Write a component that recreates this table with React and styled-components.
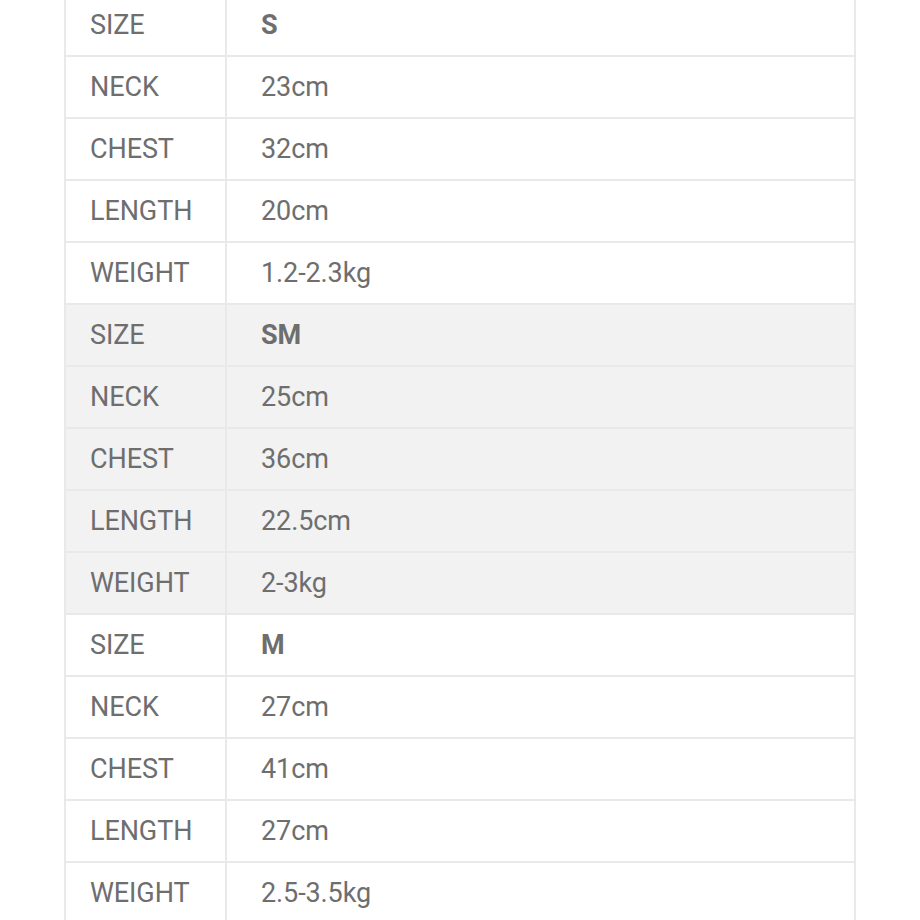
import React from "react";
import styled, { createGlobalStyle } from "styled-components";

const Global = createGlobalStyle`
  html, body { margin: 0; padding: 0; background: #ffffff; }
  body { font-family: Roboto, "Noto Sans", Arial, sans-serif; overflow: hidden; }
`;

const Page = styled.div`
  width: 920px;
  height: 920px;
  overflow: hidden;
  background: #fff;
`;

const Table = styled.div`
  margin: -5px 0 0 64px;
  width: 792px;
  border-left: 2px solid #e9e9e9;
  border-right: 2px solid #e9e9e9;
  box-sizing: border-box;
`;

const Row = styled.div`
  display: grid;
  grid-template-columns: 161px 1fr;
  height: 62px;
  box-sizing: border-box;
  border-bottom: 2px solid #e9e9e9;
  background: ${(p) => (p.$shaded ? "#f2f2f2" : "#ffffff")};
`;

const Label = styled.div`
  display: flex;
  align-items: center;
  padding-left: 24px;
  border-right: 2px solid #e9e9e9;
  font-size: 27px;
  color: #6e6e6e;
  letter-spacing: -0.1px;
`;

const Value = styled.div`
  display: flex;
  align-items: center;
  padding-left: 34px;
  font-size: 27px;
  color: #6e6e6e;
  font-weight: ${(p) => (p.$bold ? 700 : 400)};
  letter-spacing: -0.1px;
`;

const groups = [
  { size: "S", neck: "23cm", chest: "32cm", length: "20cm", weight: "1.2-2.3kg" },
  { size: "SM", neck: "25cm", chest: "36cm", length: "22.5cm", weight: "2-3kg" },
  { size: "M", neck: "27cm", chest: "41cm", length: "27cm", weight: "2.5-3.5kg" },
];

export default function App() {
  return (
    <Page>
      <Global />
      <Table>
        {groups.map((g, i) => {
          const shaded = i === 1;
          const rows = [
            ["SIZE", g.size, true],
            ["NECK", g.neck],
            ["CHEST", g.chest],
            ["LENGTH", g.length],
            ["WEIGHT", g.weight],
          ];
          return rows.map(([l, v, b]) => (
            <Row key={g.size + l} $shaded={shaded}>
              <Label>{l}</Label>
              <Value $bold={b}>{v}</Value>
            </Row>
          ));
        })}
      </Table>
    </Page>
  );
}
